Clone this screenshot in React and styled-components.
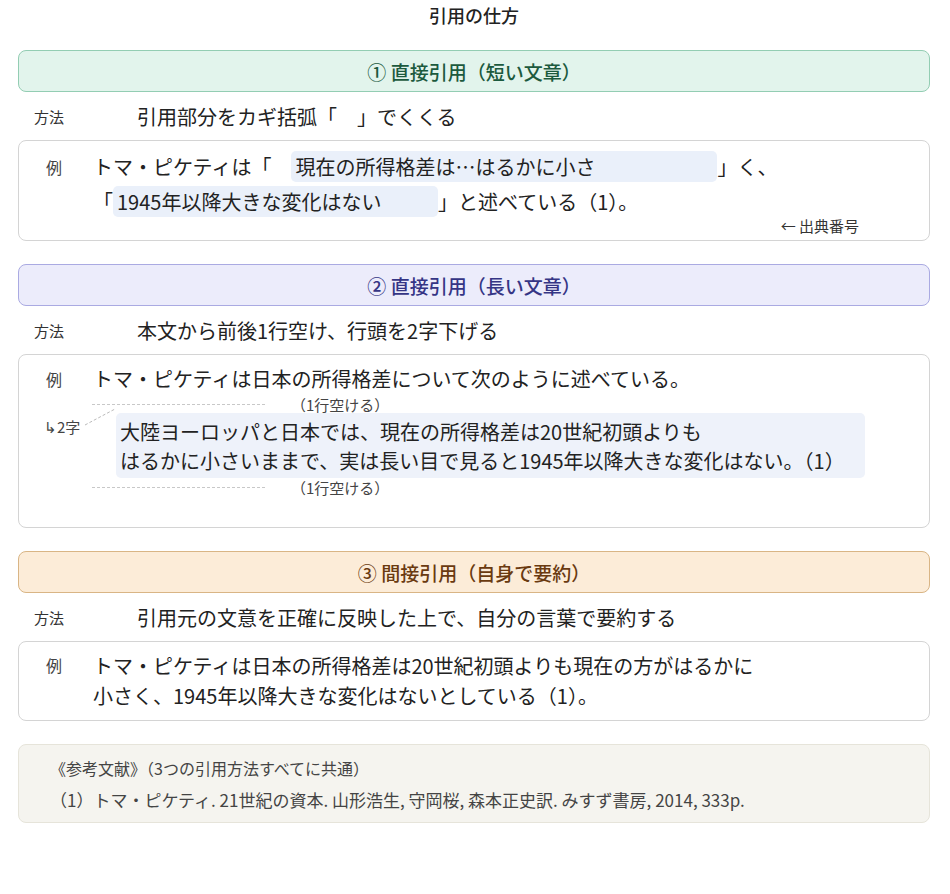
import React from "react";
import styled, { createGlobalStyle } from "styled-components";

const Global = createGlobalStyle`
  body { margin: 0; background: #fff; font-family: "Noto Sans CJK JP", "Noto Sans", sans-serif; color: #222; }
`;

const Page = styled.div`
  width: 912px; padding: 0 20px 40px 18px;
  display: flex; flex-direction: column;
`;
const Title = styled.h1`
  margin: 0; height: 32px; line-height: 30px; text-align: center;
  font-size: 18px; font-weight: 500; margin-bottom: 18px;
`;
const themes = {
  green: { bg: "#e2f4ec", border: "#93cdb3", color: "#1c5a3e" },
  purple: { bg: "#ececfb", border: "#aaaae2", color: "#353585" },
  orange: { bg: "#fcecd8", border: "#d9b585", color: "#6a3a10" },
};
const Header = styled.div`
  height: 40px; display: flex; align-items: center; justify-content: center;
  border-radius: 8px; font-size: 19px; font-weight: 500;
  background: ${p => themes[p.$t].bg}; border: 1px solid ${p => themes[p.$t].border};
  color: ${p => themes[p.$t].color};
`;
const Method = styled.div`
  display: flex; align-items: center; height: 48px;
`;
const MethodLabel = styled.span`
  width: 103px; padding-left: 16px; font-size: 15px; color: #333;
`;
const MethodText = styled.span`font-size: 20px;`;
const Box = styled.div`
  border: 1px solid #d4d4d4; border-radius: 8px; padding: ${p => p.$pad || "8px 0 8px 0"};
  min-height: ${p => p.$h || 0}px; box-sizing: border-box; position: relative;
  margin-bottom: ${p => p.$mb || 23}px;
`;
const Line = styled.div`
  display: flex; align-items: center; height: ${p => p.$h || 35}px; font-size: 20px;
  padding-left: ${p => p.$indent || 74}px; white-space: nowrap;
`;
const Ex = styled.span`
  width: 47px; padding-left: 27px; margin-left: -74px; font-size: 16px; color: #444;
`;
const Hl = styled.span`
  display: inline-block; background: #eaf0fa; border-radius: 5px;
  width: ${p => p.$w}px; height: 31px; line-height: 31px; padding-left: ${p => p.$pl || 4}px; box-sizing: border-box;
`;
const Source = styled.div`
  text-align: right; padding-right: 70px; font-size: 15px; color: #333; height: 16px; line-height: 14px;
`;
const Gap = styled.div`
  display: flex; align-items: center; height: ${p => p.$h}px; padding-left: 73px; font-size: 15px; color: #444;
`;
const Dash = styled.span`
  width: 173px; border-top: 1px dashed #c8c8c8; margin-right: 26px;
`;
const QuoteRow = styled.div`position: relative; padding-left: 97px; padding-right: 64px;`;
const Quote = styled.div`
  background: #eef2fa; border-radius: 5px; padding: 4px 0 3px 4px; font-size: 20px; line-height: 29px; white-space: nowrap;
`;
const Indent = styled.span`
  position: absolute; left: 25px; top: 3px; font-size: 15px; color: #444;
`;
const Slash = styled.svg`position: absolute; left: 64px; top: -6px;`;
const Refs = styled.div`
  background: #f5f4ef; border: 1px solid #e6e4da; border-radius: 8px; padding: 11px 0 10px 31px;
  display: flex; flex-direction: column; gap: 7px; color: #444;
`;
const RefHead = styled.div`font-size: 16px;`;
const RefItem = styled.div`font-size: 17px;`;

export default function App() {
  return (
    <Page>
      <Global />
      <Title>引用の仕方</Title>
      <Header $t="green">① 直接引用（短い文章）</Header>
      <Method><MethodLabel>方法</MethodLabel><MethodText>引用部分をカギ括弧「　」でくくる</MethodText></Method>
      <Box $pad="8px 0 5px 0">
        <Line><Ex>例</Ex>トマ・ピケティは「　<Hl $w={426}>現在の所得格差は…はるかに小さ</Hl>」く、</Line>
        <Line><span>「</span><Hl $w={325}>1945年以降大きな変化はない</Hl>」と述べている（1）。</Line>
        <Source>← 出典番号</Source>
      </Box>
      <Header $t="purple">② 直接引用（長い文章）</Header>
      <Method><MethodLabel>方法</MethodLabel><MethodText>本文から前後1行空け、行頭を2字下げる</MethodText></Method>
      <Box $pad="6px 0 8px 0" $h={174}>
        <Line><Ex>例</Ex>トマ・ピケティは日本の所得格差について次のように述べている。</Line>
        <Gap $h={17}><Dash />（1行空ける）</Gap>
        <QuoteRow>
          <Indent>↳2字</Indent>
          <Slash width="34" height="20"><line x1="2" y1="18" x2="32" y2="2" stroke="#bbb" strokeDasharray="3 2" /></Slash>
          <Quote>大陸ヨーロッパと日本では、現在の所得格差は20世紀初頭よりも<br />はるかに小さいままで、実は長い目で見ると1945年以降大きな変化はない。（1）</Quote>
        </QuoteRow>
        <Gap $h={18}><Dash />（1行空ける）</Gap>
      </Box>
      <Header $t="orange">③ 間接引用（自身で要約）</Header>
      <Method><MethodLabel>方法</MethodLabel><MethodText>引用元の文意を正確に反映した上で、自分の言葉で要約する</MethodText></Method>
      <Box $pad="8px 0 10px 0">
        <Line $h={30}><Ex>例</Ex>トマ・ピケティは日本の所得格差は20世紀初頭よりも現在の方がはるかに</Line>
        <Line $h={30}>小さく、1945年以降大きな変化はないとしている（1）。</Line>
      </Box>
      <Refs>
        <RefHead>《参考文献》（3つの引用方法すべてに共通）</RefHead>
        <RefItem>（1）トマ・ピケティ. 21世紀の資本. 山形浩生, 守岡桜, 森本正史訳. みすず書房, 2014, 333p.</RefItem>
      </Refs>
    </Page>
  );
}
